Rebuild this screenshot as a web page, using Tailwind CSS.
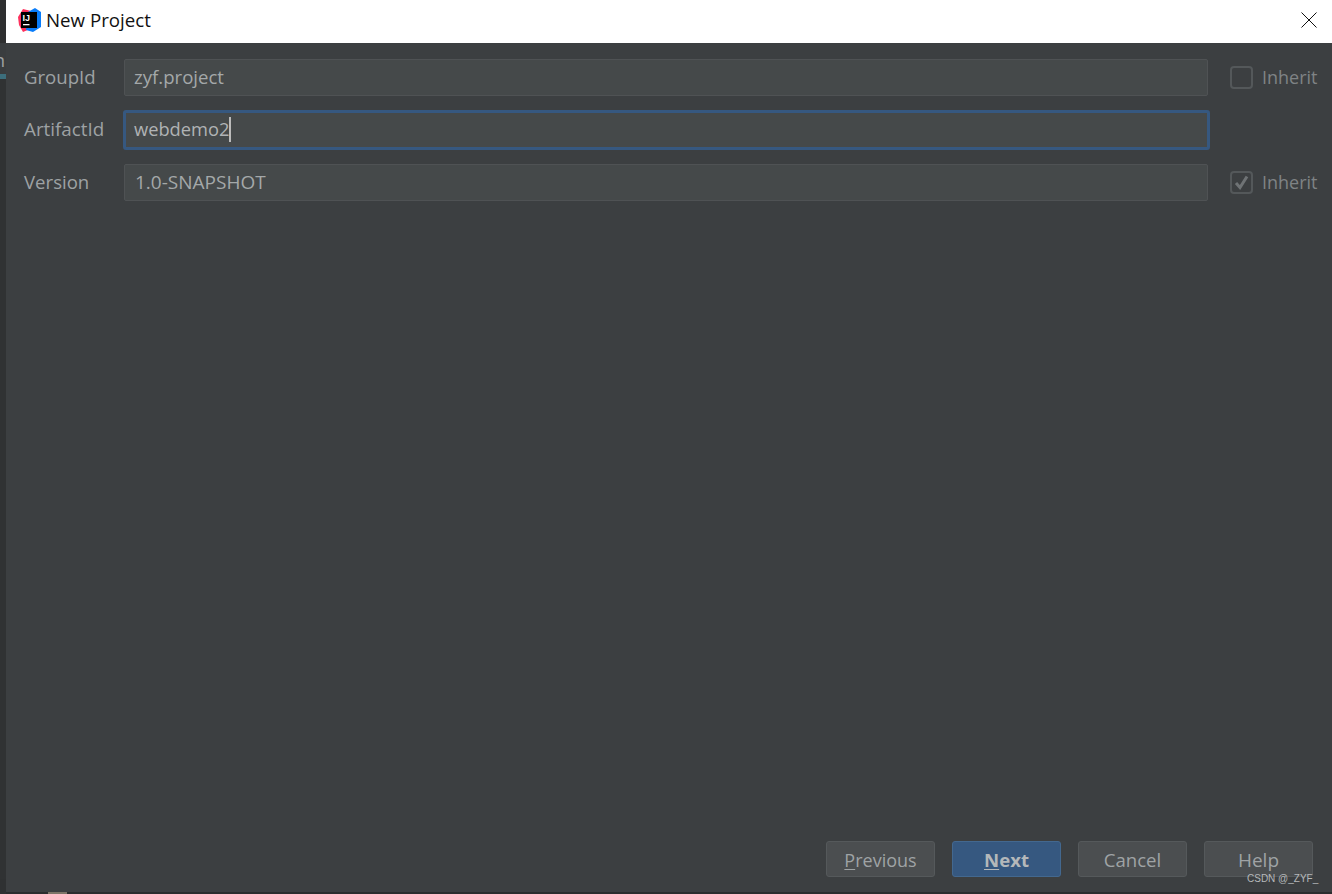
<!DOCTYPE html>
<html lang="en">
<head>
    <meta charset="UTF-8">
    <title>New Project</title>
    <script src="https://cdn.jsdelivr.net/npm/@tailwindcss/browser@4"></script>
</head>
<body class="bg-[#2b2d2e] overflow-hidden font-['Open_Sans',sans-serif]">
    <div class="relative flex h-[894px] w-[1332px]">
        <!-- bit of the IDE behind the dialog -->
        <div class="w-[6px] h-full flex flex-col bg-[#2f3132]">
            <div class="h-[43px] bg-[#2e2f30]"></div>
            <div class="h-[31px] bg-[#3a3d3f] relative overflow-hidden">
                <span class="absolute left-[-6px] top-[7px] text-[18px] leading-[20px] text-[#9ea2a4]">n</span>
            </div>
            <div class="h-[5px] bg-[#3c6e7c]"></div>
            <div class="h-[800px] bg-[#303233]"></div>
        </div>

        <div class="flex-1 flex flex-col h-[892px]">
            <!-- title bar -->
            <div class="h-[43px] bg-white flex items-center pl-[12px] pr-[15px]">
                <svg class="w-[24px] h-[24px] mb-[3px]" viewBox="0 0 24 24">
                    <path d="M0 9 L5 1 L13 3 L12 21 L5 24 L1 17 Z" fill="#fe315d"/>
                    <path d="M10 4 L17 0 L23 4 L23 19 L15 24 L8 22 Z" fill="#087cfa"/>
                    <rect x="3" y="4" width="16" height="16" fill="#000"/>
                    <text x="4.5" y="13" font-size="9" font-weight="700" fill="#fff" font-family="Liberation Sans">IJ</text>
                    <rect x="5" y="16" width="6.5" height="1.3" fill="#fff"/>
                </svg>
                <span class="ml-[4px] mb-[2px] text-[18.7px] text-[#111]">New Project</span>
                <svg class="ml-auto w-[16px] h-[16px] mb-[3px]" viewBox="0 0 16 16" fill="none" stroke="#111" stroke-width="1">
                    <path d="M0.5 0.5 L15.5 15.5 M15.5 0.5 L0.5 15.5"/>
                </svg>
            </div>

            <!-- form -->
            <div class="flex-1 bg-[#3c3f41] flex flex-col text-[#9ea2a4] text-[18.6px]">
                <div class="flex items-center h-[37px] mt-[16px] pl-[18px]">
                    <span class="w-[100px] mb-[2px]">GroupId</span>
                    <div class="w-[1084px] h-full bg-[#45494a] border border-[#4f5254] rounded-[2px] pl-[9px] pb-[2px] flex items-center text-[#a4a8a9]">zyf.project</div>
                    <span class="ml-[22px] w-[23px] h-[23px] border-2 border-[#54585a] rounded-[4px]"></span>
                    <span class="ml-[9px] text-[18px] text-[#7f8385]">Inherit</span>
                </div>
                <div class="flex items-center h-[40px] mt-[14px] pl-[18px]">
                    <span class="w-[99px] text-[18.8px] mb-[2px]">ArtifactId</span>
                    <div class="w-[1087px] h-full bg-[#45494a] border-[3px] border-[#365880] rounded-[3px] pl-[8px] pb-[2px] flex items-center text-[18.3px] text-[#b0b3b5]">webdemo2<span class="w-[2px] h-[25px] bg-[#bbbbbb]"></span></div>
                </div>
                <div class="flex items-center h-[37px] mt-[14px] pl-[18px]">
                    <span class="w-[100px] mb-[2px]">Version</span>
                    <div class="w-[1084px] h-full bg-[#45494a] border border-[#4f5254] rounded-[2px] pl-[10px] flex items-center text-[19px] text-[#a4a8a9]">1.0-SNAPSHOT</div>
                    <span class="ml-[22px] w-[23px] h-[23px] border-2 border-[#54585a] rounded-[4px] flex items-center justify-center">
                        <svg class="w-[15px] h-[15px]" viewBox="0 0 15 15" fill="none" stroke="#6f7375" stroke-width="3">
                            <path d="M2 8 L6 12.5 L13 1.5"/>
                        </svg>
                    </span>
                    <span class="ml-[9px] text-[18px] text-[#7f8385]">Inherit</span>
                </div>

                <!-- buttons -->
                <div class="mt-auto mb-[15px] pl-[820px] flex gap-[17px] text-[18px] text-[#9fa3a5]">
                    <div class="w-[109px] h-[36px] pt-[2px] bg-[#4b4e50] border border-[#55595b] rounded-[3px] flex items-center justify-center"><span><span class="underline underline-offset-2">P</span>revious</span></div>
                    <div class="w-[109px] h-[36px] pt-[2px] bg-[#365880] border border-[#43688f] rounded-[3px] flex items-center justify-center font-bold text-[18.6px] text-[#b4b8ba]"><span><span class="underline underline-offset-2">N</span>ext</span></div>
                    <div class="w-[109px] h-[36px] pt-[1px] bg-[#4b4e50] border border-[#55595b] rounded-[3px] flex items-center justify-center text-[18.6px]">Cancel</div>
                    <div class="w-[109px] h-[36px] pt-[2px] bg-[#4b4e50] border border-[#55595b] rounded-[3px] flex items-center justify-center text-[19px]">Help</div>
                </div>
            </div>
        </div>

        <!-- watermark -->
        <span class="absolute left-[1247px] top-[872px] text-[10px] leading-[13px] text-[#b5b8ba] font-['Liberation_Sans',sans-serif]">CSDN @_ZYF_</span>
        <!-- scrap of the window behind, under the dialog -->
        <span class="absolute left-[48px] top-[892px] w-[19px] h-[2px] bg-[#7d7568]"></span>
    </div>
</body>
</html>
